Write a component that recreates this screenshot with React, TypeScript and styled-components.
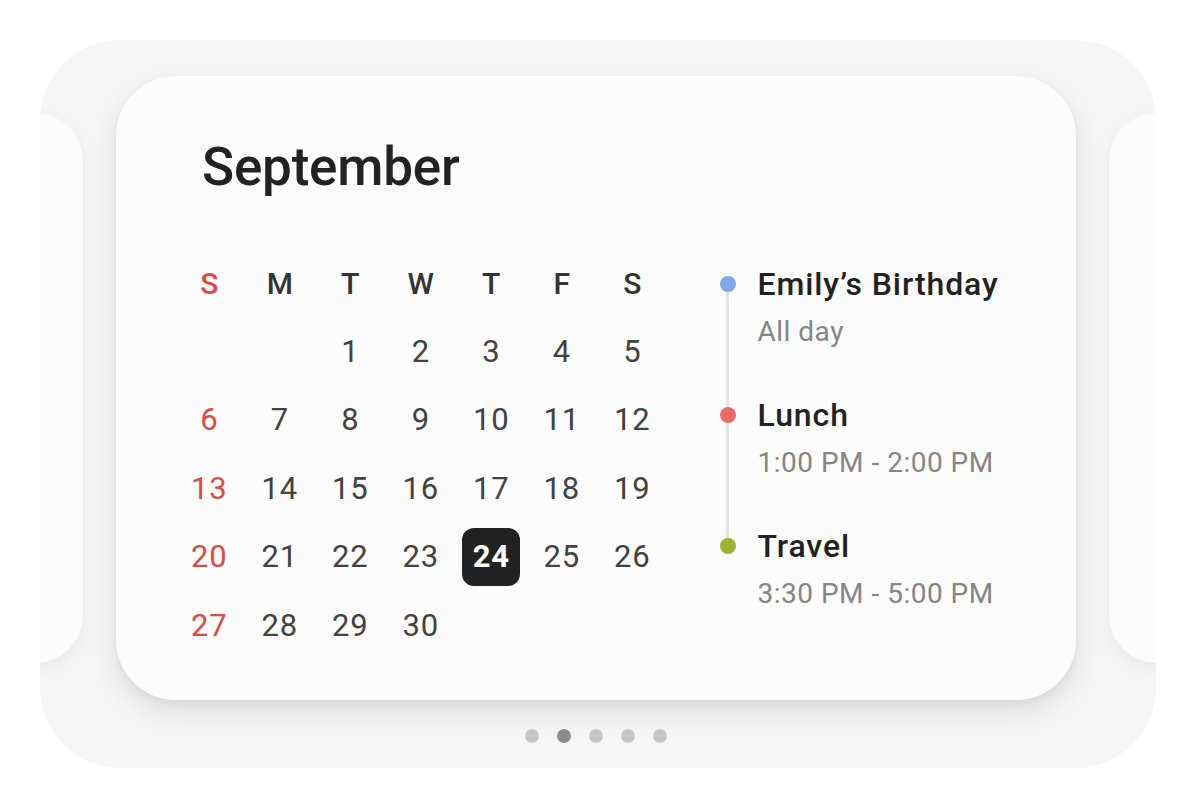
import React from "react";
import styled, { createGlobalStyle } from "styled-components";

const Global = createGlobalStyle`
  html, body { margin: 0; padding: 0; background: #ffffff; }
  body { font-family: Roboto, "Noto Sans", "Liberation Sans", sans-serif; }
  * { box-sizing: border-box; }
`;

const Page = styled.div`
  width: 1196px;
  height: 808px;
  padding: 40px;
`;

const Panel = styled.div`
  width: 1116px;
  height: 728px;
  background: #f6f6f6;
  border-radius: 80px;
  overflow: hidden;
  display: flex;
  flex-direction: column;
  align-items: center;
  padding: 36px 4px 0 0;
`;

const Carousel = styled.div`
  display: flex;
  align-items: center;
  justify-content: center;
  gap: 33px;
  width: 100%;
`;

const PeekCard = styled.div`
  flex: 0 0 auto;
  width: 880px;
  height: 550px;
  background: #fcfcfc;
  border-radius: 48px;
  box-shadow: 0 6px 18px rgba(0, 0, 0, 0.05);
`;

const Card = styled.div`
  flex: 0 0 auto;
  width: 960px;
  height: 624px;
  background: #fcfcfc;
  border-radius: 60px;
  box-shadow: 0 12px 26px rgba(0, 0, 0, 0.11), 0 2px 6px rgba(0, 0, 0, 0.04);
  padding: 65px 0 0 58px;
  display: flex;
  flex-direction: column;
`;

const Title = styled.h1`
  margin: 0 0 56px 28px;
  font-size: 53px;
  line-height: 52px;
  font-weight: 500;
  color: #222222;
  letter-spacing: -0.2px;
`;

const Body = styled.div`
  display: flex;
  align-items: flex-start;
`;

const Grid = styled.div`
  display: grid;
  grid-template-columns: repeat(7, 70.5px);
  grid-auto-rows: 68.4px;
`;

const Cell = styled.div<{ $weekend?: boolean; $head?: boolean }>`
  display: flex;
  align-items: center;
  justify-content: center;
  font-size: ${(p) => (p.$head ? "30px" : "31px")};
  letter-spacing: ${(p) => (p.$head ? "0" : "0.8px")};
  font-weight: ${(p) => (p.$head ? 500 : 400)};
  color: ${(p) => (p.$weekend ? "#db4a43" : p.$head ? "#333333" : "#424242")};
`;

const Today = styled.span`
  display: flex;
  align-items: center;
  justify-content: center;
  width: 58px;
  height: 58px;
  border-radius: 12px;
  background: #222222;
  color: #ffffff;
  font-weight: 700;
`;

const Events = styled.div`
  position: relative;
  margin: 15px 0 0 52px;
  display: flex;
  flex-direction: column;
  gap: 45px;
`;

const Rail = styled.div`
  position: absolute;
  left: 6.5px;
  top: 20px;
  bottom: 66px;
  width: 3px;
  background: #e4e4e4;
`;

const Event = styled.div`
  position: relative;
  display: grid;
  grid-template-columns: 16px auto;
  column-gap: 22px;
  row-gap: 10px;
  align-items: center;
`;

const Dot = styled.span<{ $color: string }>`
  width: 16px;
  height: 16px;
  border-radius: 50%;
  background: ${(p) => p.$color};
`;

const EventTitle = styled.div`
  font-size: 32px;
  line-height: 40px;
  font-weight: 500;
  letter-spacing: 0.9px;
  color: #222222;
`;

const EventTime = styled.div`
  grid-column: 2;
  font-size: 28px;
  line-height: 36px;
  font-weight: 400;
  letter-spacing: 0.5px;
  color: #858585;
`;

const Pager = styled.div`
  display: flex;
  gap: 18px;
  margin-top: 29px;
`;

const PagerDot = styled.span<{ $active?: boolean }>`
  width: 14px;
  height: 14px;
  border-radius: 50%;
  background: ${(p) => (p.$active ? "#8d8d8d" : "#c6c6c6")};
`;

const heads = ["S", "M", "T", "W", "T", "F", "S"];
const days: (number | null)[] = [null, null, ...Array.from({ length: 30 }, (_, i) => i + 1)];

const events = [
  { title: "Emily\u2019s Birthday", time: "All day", color: "#7fa8e6" },
  { title: "Lunch", time: "1:00 PM - 2:00 PM", color: "#ee6a6a" },
  { title: "Travel", time: "3:30 PM - 5:00 PM", color: "#9ab531" },
];

export default function App() {
  return (
    <Page>
      <Global />
      <Panel>
        <Carousel>
          <PeekCard />
          <Card>
            <Title>September</Title>
            <Body>
              <Grid>
                {heads.map((h, i) => (
                  <Cell key={"h" + i} $head $weekend={i === 0}>
                    {h}
                  </Cell>
                ))}
                {days.map((d, i) => (
                  <Cell key={"d" + i} $weekend={i % 7 === 0}>
                    {d === 24 ? <Today>24</Today> : d ?? ""}
                  </Cell>
                ))}
              </Grid>
              <Events>
                <Rail />
                {events.map((e) => (
                  <Event key={e.title}>
                    <Dot $color={e.color} />
                    <EventTitle>{e.title}</EventTitle>
                    <EventTime>{e.time}</EventTime>
                  </Event>
                ))}
              </Events>
            </Body>
          </Card>
          <PeekCard />
        </Carousel>
        <Pager>
          {[0, 1, 2, 3, 4].map((i) => (
            <PagerDot key={i} $active={i === 1} />
          ))}
        </Pager>
      </Panel>
    </Page>
  );
}
